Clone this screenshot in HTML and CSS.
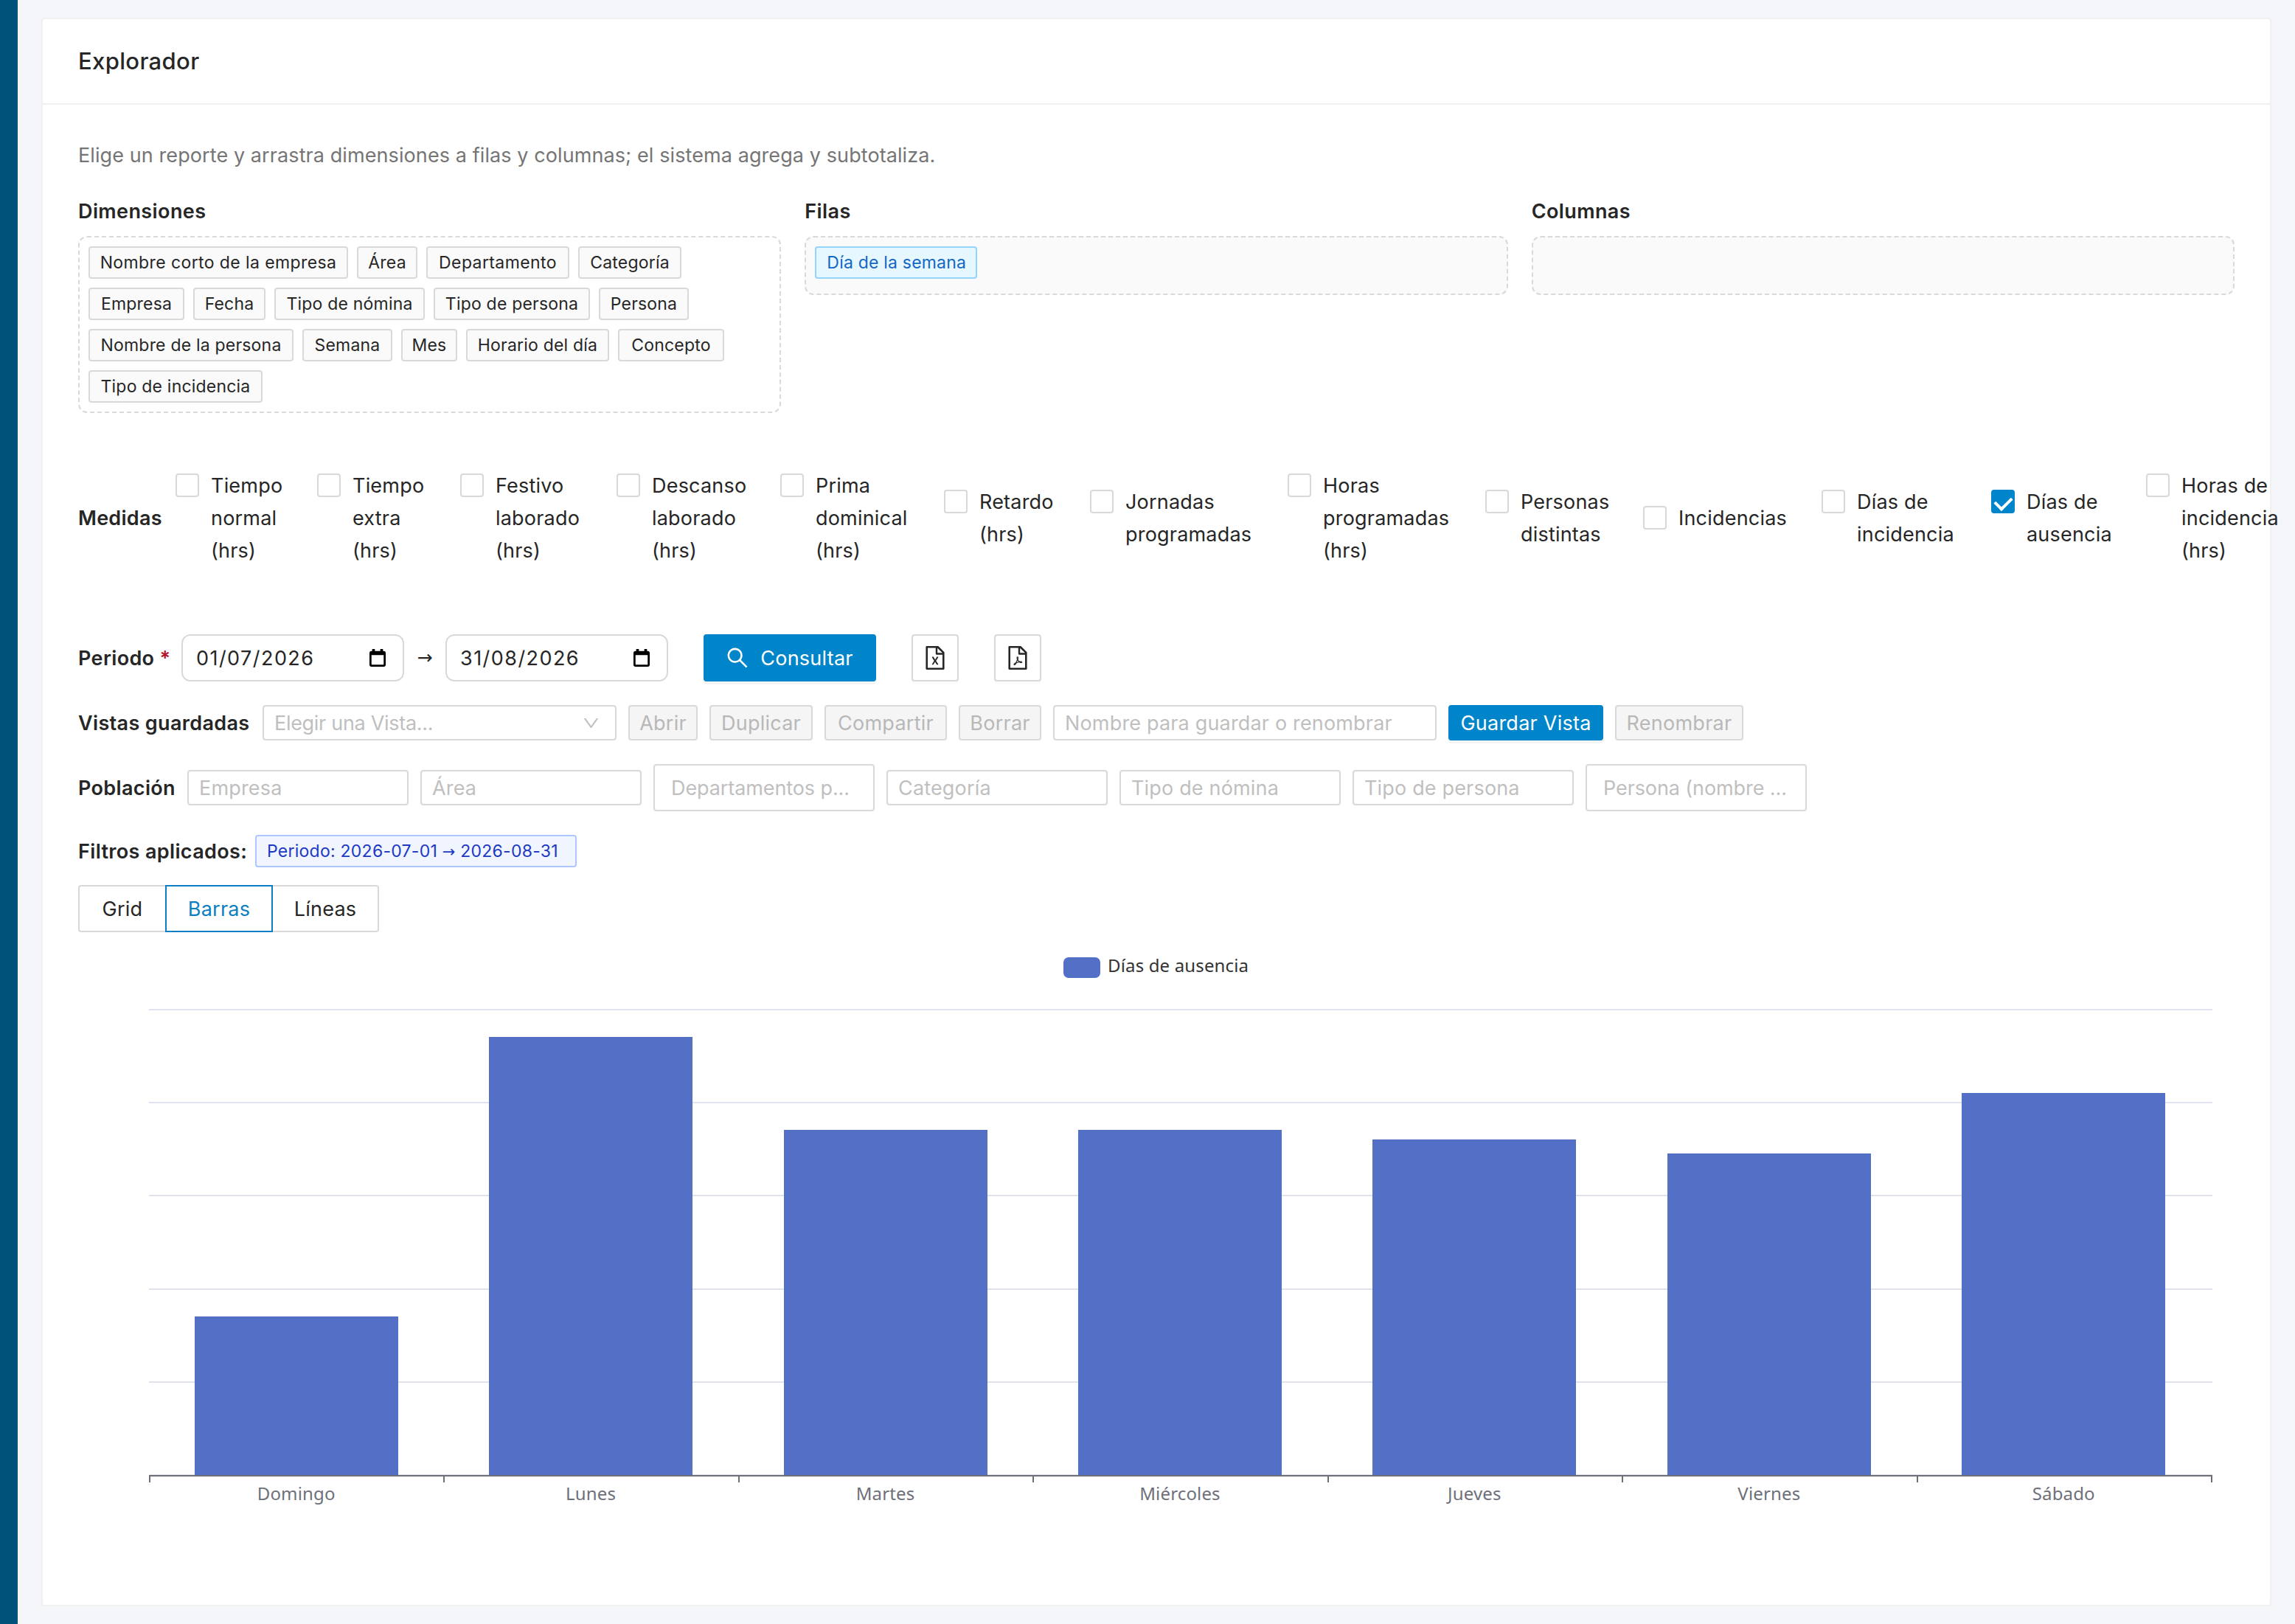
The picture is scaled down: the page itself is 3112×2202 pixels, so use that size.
FILE: index.html
```
<!DOCTYPE html>
<html lang="es">
<head>
    <meta charset="UTF-8" />
    <meta name="viewport" content="width=device-width, initial-scale=1.0" />
    <title>Explorador</title>
    <link rel="stylesheet" href="styles.css">
</head>
<body>

    <aside class="sidebar"></aside>

    <main class="card">
        <header class="card-header">
            <h1>Explorador</h1>
        </header>

        <div class="card-body">
            <p class="intro">Elige un reporte y arrastra dimensiones a filas y columnas; el sistema agrega y subtotaliza.</p>

            <section class="zones">
                <div class="zone">
                    <h2>Dimensiones</h2>
                    <div class="drop source">
                        <span class="tag">Nombre corto de la empresa</span>
                        <span class="tag">Área</span>
                        <span class="tag">Departamento</span>
                        <span class="tag">Categoría</span>
                        <span class="tag">Empresa</span>
                        <span class="tag">Fecha</span>
                        <span class="tag">Tipo de nómina</span>
                        <span class="tag">Tipo de persona</span>
                        <span class="tag">Persona</span>
                        <span class="tag">Nombre de la persona</span>
                        <span class="tag">Semana</span>
                        <span class="tag">Mes</span>
                        <span class="tag">Horario del día</span>
                        <span class="tag">Concepto</span>
                        <span class="tag">Tipo de incidencia</span>
                    </div>
                </div>
                <div class="zone">
                    <h2>Filas</h2>
                    <div class="drop target">
                        <span class="tag tag-blue">Día de la semana</span>
                    </div>
                </div>
                <div class="zone">
                    <h2>Columnas</h2>
                    <div class="drop target"></div>
                </div>
            </section>

            <section class="measures">
                <strong>Medidas</strong>
                <label><i class="check"></i><span>Tiempo normal (hrs)</span></label>
                <label><i class="check"></i><span>Tiempo extra (hrs)</span></label>
                <label><i class="check"></i><span>Festivo laborado (hrs)</span></label>
                <label><i class="check"></i><span>Descanso laborado (hrs)</span></label>
                <label><i class="check"></i><span>Prima dominical (hrs)</span></label>
                <label><i class="check"></i><span>Retardo (hrs)</span></label>
                <label><i class="check"></i><span>Jornadas programadas</span></label>
                <label><i class="check"></i><span>Horas programadas (hrs)</span></label>
                <label><i class="check"></i><span>Personas distintas</span></label>
                <label><i class="check"></i><span>Incidencias</span></label>
                <label><i class="check"></i><span>Días de incidencia</span></label>
                <label><i class="check checked"></i><span>Días de ausencia</span></label>
                <label><i class="check"></i><span>Horas de incidencia (hrs)</span></label>
            </section>

            <section class="row period">
                <strong>Periodo <em>*</em></strong>
                <div class="date">
                    <span>01/07/2026</span>
                    <svg viewBox="0 0 24 26"><path d="M4 0h4v3h8V0h4v3h1a3 3 0 0 1 3 3v17a3 3 0 0 1-3 3H3a3 3 0 0 1-3-3V6a3 3 0 0 1 3-3h1zM3 9v14h18V9z" fill-rule="evenodd" /></svg>
                </div>
                <span class="arrow">→</span>
                <div class="date">
                    <span>31/08/2026</span>
                    <svg viewBox="0 0 24 26"><path d="M4 0h4v3h8V0h4v3h1a3 3 0 0 1 3 3v17a3 3 0 0 1-3 3H3a3 3 0 0 1-3-3V6a3 3 0 0 1 3-3h1zM3 9v14h18V9z" fill-rule="evenodd" /></svg>
                </div>
                <button class="btn primary query">
                    <svg viewBox="64 64 896 896"><path d="M909.6 854.5L649.9 594.8C690.2 542.7 712 479 712 412c0-80.2-31.3-155.4-87.9-212.1-56.6-56.7-132-87.9-212.1-87.9s-155.5 31.3-212.1 87.9C143.2 256.5 112 331.8 112 412c0 80.1 31.3 155.5 87.9 212.1C256.5 680.8 331.8 712 412 712c67 0 130.6-21.8 182.7-62l259.7 259.6a8.2 8.2 0 0 0 11.6 0l43.6-43.5a8.2 8.2 0 0 0 0-11.6zM570.4 570.4C528 612.7 471.8 636 412 636s-116-23.3-158.4-65.6C211.3 528 188 471.8 188 412s23.3-116.1 65.6-158.4C296 211.3 352.2 188 412 188s116.1 23.2 158.4 65.6S636 352.2 636 412s-23.3 116.1-65.6 158.4z" /></svg>
                    <span>Consultar</span>
                </button>
                <button class="btn icon">
                    <svg viewBox="64 64 896 896"><path d="M854.6 288.6L639.4 73.4c-6-6-14.1-9.4-22.6-9.4H192c-17.7 0-32 14.3-32 32v832c0 17.7 14.3 32 32 32h640c17.7 0 32-14.3 32-32V311.3c0-8.5-3.4-16.7-9.4-22.7zM790.2 326H602V137.8L790.2 326zm1.8 562H232V136h302v216a42 42 0 0 0 42 42h216v494zM514.1 580.1l-61.8-102.4c-2.2-3.6-6.1-5.8-10.3-5.8h-38.4c-2.3 0-4.5.6-6.4 1.9-5.6 3.5-7.3 10.9-3.7 16.6l82.3 130.4-83.4 132.8a12.04 12.04 0 0 0 10.2 18.4h34.5c4.2 0 8-2.2 10.2-5.7L510 664.8l62.3 101.4c2.2 3.6 6.1 5.7 10.2 5.7H620c2.3 0 4.5-.7 6.5-1.9 5.6-3.6 7.2-11 3.6-16.6l-84-130.4 85.3-132.5a12.04 12.04 0 0 0-10.1-18.5h-35.7c-4.2 0-8.1 2.2-10.3 5.8l-61.2 102.3z" /></svg>
                </button>
                <button class="btn icon">
                    <svg viewBox="64 64 896 896"><path d="M531.3 574.4l.3-1.4c5.8-23.9 13.1-53.7 7.4-80.7-3.8-21.3-19.5-29.6-32.9-30.2-15.8-.7-29.9 8.3-33.4 21.4-6.6 24-.7 56.8 10.1 98.6-13.6 32.4-35.3 79.5-51.2 107.5-29.6 15.3-69.3 38.9-75.2 68.7-1.2 5.5.2 12.5 3.5 18.8 3.7 7 9.6 12.4 16.5 15 3 1.1 6.6 2 10.8 2 17.6 0 46.1-14.2 84.1-79.4 5.8-1.9 11.8-3.9 17.6-5.9 27.2-9.2 55.4-18.8 80.9-23.1 28.2 15.1 60.3 24.8 82.1 24.8 21.6 0 30.1-12.8 33.3-20.5 5.6-13.5 2.9-30.5-6.2-39.6-13.2-13-45.3-16.4-95.3-10.2-24.6-15-40.7-35.4-52.4-65.8zM421.6 726.3c-13.9 20.2-24.4 30.3-30.1 34.7 6.7-12.3 19.8-25.3 30.1-34.7zm87.6-235.5c5.2 8.9 4.5 35.8.5 49.4-4.9-19.9-5.6-48.1-2.7-51.4.8.1 1.5.7 2.2 2zm-1.6 120.5c10.7 18.5 24.2 34.4 39.1 46.2-21.6 4.9-41.3 13-58.9 20.2-4.2 1.7-8.3 3.4-12.3 5 13.3-24.1 24.4-51.4 32.1-71.4zm155.6 65.5c.1.2.2.5-.4.9h-.2l-.2.3c-.8.5-9 5.3-44.3-8.6 40.6-1.9 45 7.3 45.1 7.4zm191.4-388.2L639.4 73.4c-6-6-14.1-9.4-22.6-9.4H192c-17.7 0-32 14.3-32 32v832c0 17.7 14.3 32 32 32h640c17.7 0 32-14.3 32-32V311.3c0-8.5-3.4-16.7-9.4-22.7zM790.2 326H602V137.8L790.2 326zm1.8 562H232V136h302v216a42 42 0 0 0 42 42h216v494z" /></svg>
                </button>
            </section>

            <section class="row views">
                <strong>Vistas guardadas</strong>
                <div class="field select">
                    <span>Elegir una Vista...</span>
                    <svg viewBox="64 64 896 896"><path d="M884 256h-75c-5.1 0-9.9 2.5-12.9 6.6L512 654.2 227.9 262.6c-3-4.1-7.8-6.6-12.9-6.6h-75c-6.5 0-10.3 7.4-6.5 12.7l352.6 486.1c12.8 17.6 39 17.6 51.7 0l352.6-486.1c3.9-5.3.1-12.7-6.4-12.7z" /></svg>
                </div>
                <button class="btn small" disabled>Abrir</button>
                <button class="btn small" disabled>Duplicar</button>
                <button class="btn small" disabled>Compartir</button>
                <button class="btn small" disabled>Borrar</button>
                <div class="field"><span>Nombre para guardar o renombrar</span></div>
                <button class="btn small primary">Guardar Vista</button>
                <button class="btn small" disabled>Renombrar</button>
            </section>

            <section class="row population">
                <strong>Población</strong>
                <div class="field"><span>Empresa</span></div>
                <div class="field"><span>Área</span></div>
                <div class="field large"><span>Departamentos p...</span></div>
                <div class="field"><span>Categoría</span></div>
                <div class="field"><span>Tipo de nómina</span></div>
                <div class="field"><span>Tipo de persona</span></div>
                <div class="field large"><span>Persona (nombre ...</span></div>
            </section>

            <section class="row applied">
                <strong>Filtros aplicados:</strong>
                <span class="tag tag-geek">Periodo: 2026-07-01 <b>→</b> 2026-08-31</span>
            </section>

            <nav class="tabs">
                <a class="tab">Grid</a>
                <a class="tab active">Barras</a>
                <a class="tab">Líneas</a>
            </nav>

            <section class="chart">
                <div class="legend"><i></i><span>Días de ausencia</span></div>
                <div class="plot">
                    <div class="bar" style="height: 34%"></div>
                    <div class="bar" style="height: 94%"></div>
                    <div class="bar" style="height: 74%"></div>
                    <div class="bar" style="height: 74%"></div>
                    <div class="bar" style="height: 72%"></div>
                    <div class="bar" style="height: 69%"></div>
                    <div class="bar" style="height: 82%"></div>
                </div>
                <div class="ticks"><i></i><i></i><i></i><i></i><i></i><i></i><i></i></div>
                <div class="axis">
                    <span>Domingo</span>
                    <span>Lunes</span>
                    <span>Martes</span>
                    <span>Miércoles</span>
                    <span>Jueves</span>
                    <span>Viernes</span>
                    <span>Sábado</span>
                </div>
            </section>
        </div>
    </main>

</body>
</html>
```
FILE: styles.css
```
* {
    box-sizing: border-box;
}

body {
    margin: 0;
    height: 2202px;
    display: flex;
    overflow: hidden;
    background: #f4f6fa;
    color: #262626;
    font-family: Inter, "Liberation Sans", sans-serif;
    font-size: 27px;
    letter-spacing: 0.25px;
    line-height: 44px;
}

h1, h2, p {
    margin: 0;
}

strong {
    font-weight: 600;
}

.sidebar {
    width: 24px;
    flex: none;
    background: #00527a;
}

.card {
    width: 3024px;
    height: 2154px;
    flex: none;
    margin: 24px 0 0 32px;
    background: #fff;
    border: 2px solid #f0f0f0;
    border-radius: 4px;
}

.card-header {
    height: 116px;
    padding: 0 48px;
    display: flex;
    align-items: center;
    border-bottom: 2px solid #f0f0f0;
}

.card-header h1 {
    font-size: 31px;
    font-weight: 500;
    letter-spacing: 0.35px;
}

.card-body {
    padding: 47px 48px;
}

.intro {
    color: #757575;
    letter-spacing: 0.09px;
}

/* drag and drop zones */
.zones {
    display: grid;
    grid-template-columns: repeat(3, 1fr);
    gap: 32px;
    align-items: start;
    margin-top: 32px;
}

.zone h2 {
    font-size: 27px;
    font-weight: 600;
    letter-spacing: 0.4px;
    margin-bottom: 11px;
}

.drop {
    display: flex;
    flex-wrap: wrap;
    align-items: flex-start;
    gap: 12px;
    min-height: 80px;
    padding: 12px;
    border: 2px dashed #d9d9d9;
    border-radius: 12px;
}

.drop.target {
    background: #fafafa;
}

.tag {
    height: 44px;
    padding: 0 14px;
    border: 2px solid #d9d9d9;
    border-radius: 4px;
    background: #fafafa;
    font-size: 23px;
    letter-spacing: 0.2px;
    line-height: 40px;
    white-space: nowrap;
}

.source .tag {
    padding: 0;
    text-align: center;
}

.source .tag:nth-child(1) { width: 352px; letter-spacing: 0.4px; }
.source .tag:nth-child(2) { width: 82px; }
.source .tag:nth-child(3) { width: 194px; letter-spacing: 0.4px; }
.source .tag:nth-child(4) { width: 140px; }
.source .tag:nth-child(5) { width: 130px; }
.source .tag:nth-child(6) { width: 98px; }
.source .tag:nth-child(7) { width: 204px; }
.source .tag:nth-child(8) { width: 212px; }
.source .tag:nth-child(9) { width: 122px; }
.source .tag:nth-child(10) { width: 278px; }
.source .tag:nth-child(11) { width: 122px; }
.source .tag:nth-child(12) { width: 76px; }
.source .tag:nth-child(13) { width: 194px; }
.source .tag:nth-child(14) { width: 144px; }
.source .tag:nth-child(15) { width: 236px; }

.tag-blue {
    width: 220px;
    color: #1268c3;
    background: #e6f7ff;
    border-color: #91d5ff;
}

.tag-geek {
    width: 436px;
    color: #1d39c4;
    background: #f0f5ff;
    border-color: #adc6ff;
    letter-spacing: 0.25px;
}

.tag-geek b {
    font-family: "DejaVu Sans", sans-serif;
    font-weight: 400;
    font-size: 21px;
    line-height: 1;
}

/* measures */
.measures {
    display: grid;
    grid-template-columns: 132px 192px 194px 212px 222px 222px 198px 268px 268px 214px 242px 230px 210px 200px;
    align-items: center;
    margin-top: 77px;
}

.measures label {
    display: flex;
    align-items: flex-start;
}

.measures label span {
    width: min-content;
    margin-left: 16px;
    letter-spacing: 0.2px;
}

.check {
    width: 32px;
    height: 32px;
    flex: none;
    margin-top: 5px;
    border: 2px solid #d9d9d9;
    border-radius: 4px;
    background: #fff;
}

.check.checked {
    display: flex;
    justify-content: center;
    background: #0085ca;
    border-color: #0085ca;
}

.check.checked::after {
    content: "";
    width: 11px;
    height: 18px;
    margin-top: 3px;
    border: solid #fff;
    border-width: 0 4px 4px 0;
    transform: rotate(45deg);
}

/* toolbar rows */
.row {
    display: flex;
    align-items: center;
    gap: 16px;
}

.row strong {
    flex: none;
    padding-top: 2px;
    letter-spacing: 0.35px;
    white-space: nowrap;
}

.period {
    margin-top: 91px;
    height: 64px;
}

.period strong {
    width: 124px;
}

.period em {
    color: #b3142d;
    font-style: normal;
}

.date {
    width: 302px;
    height: 64px;
    padding: 0 23px 0 18px;
    display: flex;
    align-items: center;
    justify-content: space-between;
    border: 2px solid #d9d9d9;
    border-radius: 12px;
    letter-spacing: 1.45px;
}

.date span {
    padding-top: 2px;
}

.date svg {
    width: 22px;
    height: 24px;
    fill: #000;
}

.arrow {
    width: 24px;
    font-family: "DejaVu Sans", sans-serif;
    font-size: 25px;
    text-align: center;
}

.btn {
    height: 64px;
    padding: 0 30px;
    display: flex;
    align-items: center;
    justify-content: center;
    border: 2px solid #d9d9d9;
    border-radius: 4px;
    background: #fff;
    color: #262626;
    font: inherit;
    letter-spacing: inherit;
    white-space: nowrap;
    box-shadow: 0 4px 0 rgba(0, 0, 0, 0.016);
}

.btn svg {
    fill: currentColor;
}

.btn.primary {
    background: #0085ca;
    border-color: #0085ca;
    color: #fff;
    box-shadow: 0 4px 0 rgba(0, 0, 0, 0.045);
}

.query {
    width: 234px;
    gap: 16px;
    margin-left: 32px;
    padding: 0;
}

.query span {
    padding-top: 2px;
}

.query svg {
    width: 30px;
    height: 30px;
}

.btn.icon {
    width: 64px;
    margin-left: 32px;
    padding: 0;
}

.btn.icon svg {
    width: 32px;
    height: 32px;
}

.btn.small {
    height: 48px;
    padding: 2px 0 0;
}

.btn:disabled {
    background: #f5f5f5;
    color: #b8b8b8;
    box-shadow: none;
}

.views {
    display: grid;
    grid-template-columns: 234px 480px 94px 140px 166px 112px 520px 210px 174px;
    margin-top: 32px;
}

.field {
    height: 48px;
    padding: 0 14px;
    display: flex;
    align-items: center;
    justify-content: space-between;
    border: 2px solid #d9d9d9;
    border-radius: 4px;
    background: #fff;
    color: #bfbfbf;
    letter-spacing: 0.17px;
    white-space: nowrap;
}

.field span {
    padding-top: 2px;
}

.select svg {
    width: 23px;
    height: 23px;
    margin-right: 7px;
    fill: #bfbfbf;
}

.select span {
    letter-spacing: -0.3px;
}

.population {
    display: grid;
    grid-template-columns: 132px repeat(7, 300px);
    margin-top: 32px;
}

.field.large {
    height: 64px;
    padding: 0 22px;
    letter-spacing: -0.1px;
}

.applied {
    height: 44px;
    margin-top: 32px;
    gap: 12px;
}

.applied strong {
    width: 228px;
}

.tabs {
    display: flex;
    margin-top: 24px;
}

.tab {
    width: 144px;
    height: 64px;
    border: 2px solid #d9d9d9;
    line-height: 62px;
    text-align: center;
}

.tab:first-child {
    width: 118px;
    border-right: 0;
    border-radius: 4px 0 0 4px;
}

.tab:last-child {
    border-left: 0;
    border-radius: 0 4px 4px 0;
}

.tab.active {
    width: 146px;
    color: #0b7fc1;
    border-color: #0b7fc1;
}

/* bar chart */
.chart {
    margin: 24px 30px 0 96px;
    font-family: "Noto Sans", sans-serif;
    font-size: 24px;
    letter-spacing: 0.15px;
}

.legend {
    display: flex;
    align-items: center;
    height: 44px;
    padding-left: 1240px;
    color: #333;
}

.legend i {
    width: 50px;
    height: 28px;
    margin: 4px 10px 0 0;
    border-radius: 7px;
    background: #5470c6;
}

.legend span {
    padding-bottom: 2px;
}

.plot {
    height: 634px;
    margin-top: 36px;
    padding-right: 2px;
    display: flex;
    align-items: flex-end;
    justify-content: space-around;
    border-bottom: 2px solid #6e7079;
    background: repeating-linear-gradient(#e0e2ee 0 2px, #fff 2px 126.2px);
}

.bar {
    width: 276px;
    background: #5470c6;
}

.ticks {
    display: flex;
    height: 8px;
    border-right: 2px solid #6e7079;
}

.ticks i {
    flex: 1;
    border-left: 2px solid #6e7079;
}

.axis {
    display: flex;
    padding-right: 2px;
    color: #6e7079;
    line-height: 30px;
}

.axis span {
    flex: 1;
    text-align: center;
}
```
